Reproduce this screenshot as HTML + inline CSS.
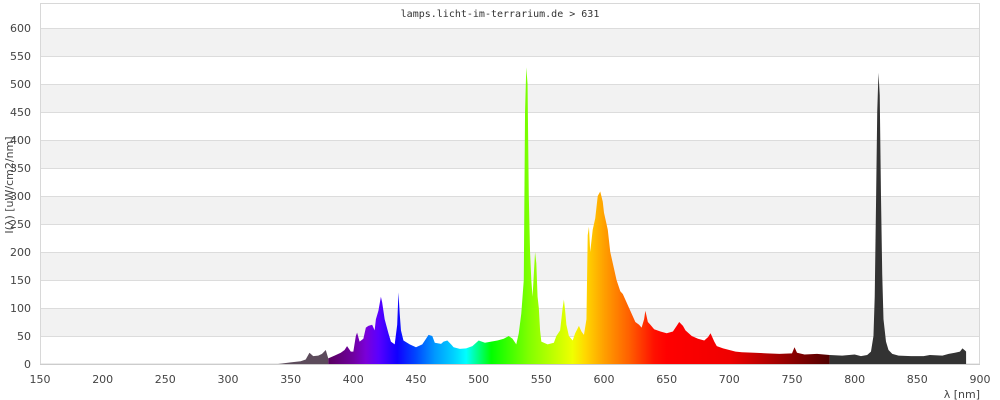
<!DOCTYPE html>
<html><head><meta charset="utf-8"><style>
html,body{margin:0;padding:0;background:#fff;}
svg{display:block;font-family:"DejaVu Sans","Liberation Sans",sans-serif;}
</style></head><body>
<svg width="1000" height="400" viewBox="0 0 1000 400" xmlns="http://www.w3.org/2000/svg">
<defs>
<linearGradient id="sp" gradientUnits="userSpaceOnUse" x1="380" y1="0" x2="780" y2="0">
<stop offset="0" stop-color="#58005e"/>
<stop offset="0.05" stop-color="#7000a0"/>
<stop offset="0.075" stop-color="#7a00d8"/>
<stop offset="0.1" stop-color="#5a00ff"/>
<stop offset="0.1375" stop-color="#1000ff"/>
<stop offset="0.175" stop-color="#0048ff"/>
<stop offset="0.2125" stop-color="#0098ff"/>
<stop offset="0.25" stop-color="#00d0ff"/>
<stop offset="0.275" stop-color="#00ffff"/>
<stop offset="0.3" stop-color="#00ff80"/>
<stop offset="0.325" stop-color="#00ff00"/>
<stop offset="0.3625" stop-color="#40ff00"/>
<stop offset="0.4" stop-color="#80ff00"/>
<stop offset="0.45" stop-color="#c0ff00"/>
<stop offset="0.4875" stop-color="#f0ff00"/>
<stop offset="0.5125" stop-color="#ffd800"/>
<stop offset="0.55" stop-color="#ffa000"/>
<stop offset="0.6" stop-color="#ff6000"/>
<stop offset="0.65" stop-color="#ff1000"/>
<stop offset="0.675" stop-color="#ff0000"/>
<stop offset="0.8" stop-color="#f00000"/>
<stop offset="0.9" stop-color="#a00000"/>
<stop offset="1" stop-color="#500000"/>
</linearGradient>
<clipPath id="cp"><polygon points="340,0 350,3 358,5 362,8 365,20 368,14 372,15 375,18 378,25 380,10 385,15 390,20 393,25 395,32 398,22 400,22 402,50 403,56 405,40 408,45 410,65 412,68 415,70 417,60 418,80 420,95 422,120 423,110 425,80 428,55 430,40 433,35 435,70 436,128 437,90 438,60 440,42 445,35 450,30 455,35 458,45 460,52 463,50 465,38 470,36 472,40 475,42 478,35 480,30 485,27 490,28 495,32 498,38 500,42 505,38 510,40 515,42 520,45 524,50 527,45 530,35 532,55 534,90 536,150 537,450 538,530 539,500 540,300 541,200 542,150 543,120 544,160 545,200 546,180 547,120 548,100 549,60 550,40 555,35 560,38 562,50 565,60 567,100 568,115 569,95 570,70 572,50 575,42 577,55 580,68 582,58 584,52 586,80 587,230 588,245 589,200 591,240 593,260 595,300 597,308 599,290 600,270 603,240 605,200 608,170 610,150 613,130 615,125 618,110 620,100 623,85 625,75 628,70 630,65 632,80 633,95 635,75 637,70 640,62 645,58 650,55 655,58 658,68 660,75 663,68 665,60 670,50 675,45 680,42 683,48 685,55 688,40 690,32 695,28 700,25 705,22 710,21 720,20 730,19 740,18 750,19 752,30 754,20 760,17 770,18 780,16 790,15 800,17 805,14 810,16 813,22 815,50 816,120 817,280 818,450 819,520 820,480 821,300 822,160 823,80 825,40 827,25 830,18 835,15 845,14 855,14 860,16 870,15 875,18 880,20 884,22 886,28 888,24 889,22 889,0"/></clipPath>
</defs>
<rect x="40" y="3" width="940" height="361" fill="#fff"/>
<g fill="#f2f2f2">
<rect x="40" y="28" width="940" height="28"/>
<rect x="40" y="84" width="940" height="28"/>
<rect x="40" y="140" width="940" height="28"/>
<rect x="40" y="196" width="940" height="28"/>
<rect x="40" y="252" width="940" height="28"/>
<rect x="40" y="308" width="940" height="28"/>
</g>
<g stroke="#dcdcdc" stroke-width="1">
<line x1="40" y1="28.5" x2="980" y2="28.5"/><line x1="40" y1="56.5" x2="980" y2="56.5"/><line x1="40" y1="84.5" x2="980" y2="84.5"/><line x1="40" y1="112.5" x2="980" y2="112.5"/><line x1="40" y1="140.5" x2="980" y2="140.5"/><line x1="40" y1="168.5" x2="980" y2="168.5"/><line x1="40" y1="196.5" x2="980" y2="196.5"/><line x1="40" y1="224.5" x2="980" y2="224.5"/><line x1="40" y1="252.5" x2="980" y2="252.5"/><line x1="40" y1="280.5" x2="980" y2="280.5"/><line x1="40" y1="308.5" x2="980" y2="308.5"/><line x1="40" y1="336.5" x2="980" y2="336.5"/>
</g>
<rect x="40.5" y="3.5" width="939" height="360.5" fill="none" stroke="#d8d8d8"/>
<g transform="translate(40,364) scale(1.25333,-0.56) translate(-150,0)" clip-path="url(#cp)">
<rect x="330" y="0" width="50" height="650" fill="#5c4b5b"/>
<rect x="380" y="0" width="400" height="650" fill="url(#sp)"/>
<rect x="780" y="0" width="120" height="650" fill="#333"/>
</g>
<line x1="40" y1="364.5" x2="980" y2="364.5" stroke="#ccc"/>
<text x="500" y="17" text-anchor="middle" font-family="'DejaVu Sans Mono','Liberation Mono',monospace" font-size="10" fill="#333">lamps.licht-im-terrarium.de &gt; 631</text>
<g font-size="11" fill="#444" text-anchor="end">
<text x="31" y="32">600</text><text x="31" y="60">550</text><text x="31" y="88">500</text><text x="31" y="116">450</text><text x="31" y="144">400</text><text x="31" y="172">350</text><text x="31" y="200">300</text><text x="31" y="228">250</text><text x="31" y="256">200</text><text x="31" y="284">150</text><text x="31" y="312">100</text><text x="31" y="340">50</text><text x="31" y="368">0</text>
</g>
<g font-size="11" fill="#444" text-anchor="middle">
<text x="40" y="383">150</text><text x="102.7" y="383">200</text><text x="165.3" y="383">250</text><text x="228" y="383">300</text><text x="290.7" y="383">350</text><text x="353.3" y="383">400</text><text x="416" y="383">450</text><text x="478.7" y="383">500</text><text x="541.3" y="383">550</text><text x="604" y="383">600</text><text x="666.7" y="383">650</text><text x="729.3" y="383">700</text><text x="792" y="383">750</text><text x="854.7" y="383">800</text><text x="917.3" y="383">850</text><text x="980" y="383">900</text>
</g>
<text x="980" y="398" text-anchor="end" font-size="11" fill="#444">λ [nm]</text>
<text transform="translate(13,185) rotate(-90)" text-anchor="middle" font-size="11" fill="#444">I(λ)  [uW/cm2/nm]</text>
</svg>
</body></html>
